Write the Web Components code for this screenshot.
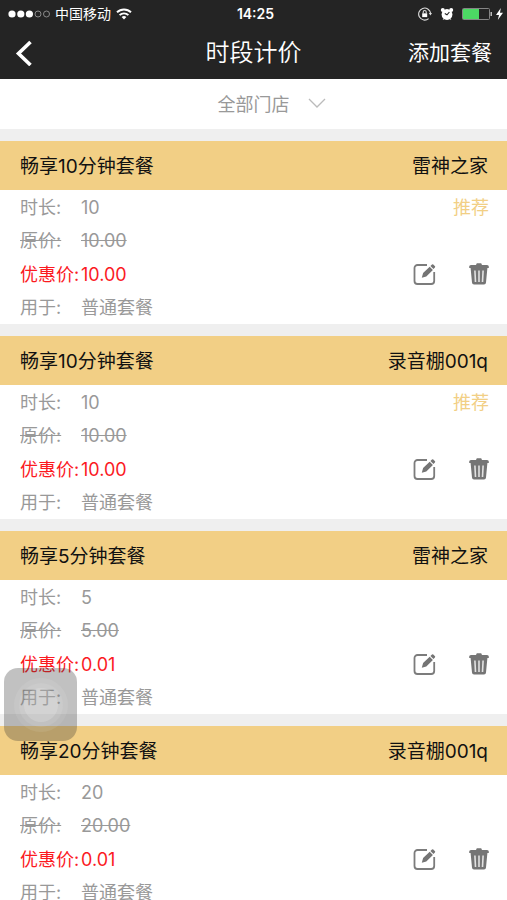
<!DOCTYPE html>
<html lang="zh-CN">
<head>
<meta charset="utf-8">
<meta name="viewport" content="width=device-width, initial-scale=1">
<title>时段计价</title>
<style>
  body {
    margin: 0;
    font-family: Inter, 'Noto Sans CJK SC', sans-serif;
    font-size: 18px;
    color: #999;
    background: #efefef;
  }
</style>
</head>
<body>
<pricing-page></pricing-page>

<script>
class StatusBar extends HTMLElement {
  constructor() {
    super()
    this.attachShadow({ mode: 'open' }).innerHTML = `
      <style>
        :host {
          display: grid;
          grid-template-columns: 1fr auto 1fr;
          align-items: center;
          height: 28px;
          padding: 0 4px 0 8px;
          font-size: 14px;
          line-height: 28px;
          color: #fff;
        }
        div { display: flex; align-items: center; gap: 5px; }
        .right { justify-content: flex-end; gap: 8px; }
        .power { gap: 4px; }
        time { font-weight: 600; font-size: 14px; }
        svg { display: block; }
      </style>
      <div>
        <svg width="42" height="10" viewBox="0 0 42 10" fill="#fff">
          <circle cx="4" cy="5" r="3.6"/><circle cx="12.8" cy="5" r="3.6"/><circle cx="21.4" cy="5" r="3.6"/>
          <g fill="none" stroke="#8a8a8a"><circle cx="30" cy="5" r="3"/><circle cx="38.5" cy="5" r="3"/></g>
        </svg>
        <span><slot name="carrier"></slot></span>
        <svg width="16" height="12" viewBox="0 0 16 12" fill="none" stroke="#fff" stroke-width="1.9">
          <path d="M1 4.3a10 10 0 0 1 14 0M3.6 7.2a6.2 6.2 0 0 1 8.8 0"/>
          <path d="M8 11.5 5.6 9.1a3.4 3.4 0 0 1 4.8 0z" fill="#fff" stroke="none"/>
        </svg>
      </div>
      <time><slot name="time"></slot></time>
      <div class="right">
        <svg width="14" height="14" viewBox="0 0 14 14" fill="none" stroke="#ddd" stroke-width="1.1">
          <path d="M12.6 6.2A6 6 0 1 0 10.6 11.6"/>
          <path d="M10.8 6h3.2l-1.6 2.4z" fill="#ddd" stroke="none"/>
          <rect x="4.2" y="6.3" width="5" height="3.8" fill="#fff" stroke="none"/>
          <path d="M5.2 6.5V5a1.5 1.5 0 0 1 3 0v1.5"/>
        </svg>
        <svg width="14" height="14" viewBox="0 0 14 14">
          <g fill="#fff"><circle cx="7" cy="7.5" r="5.4"/><circle cx="2.8" cy="3" r="2"/><circle cx="11.2" cy="3" r="2"/>
          <path d="m2.5 13 2-2.6 1.5 1zM11.5 13l-2-2.6-1.5 1z"/></g>
          <path d="M9.4 5 7 7.8 4.8 6.6" fill="none" stroke="#242424" stroke-width="1.1"/>
        </svg>
        <div class="power">
          <svg width="30" height="14" viewBox="0 0 30 14">
            <rect x=".5" y="1.5" width="27" height="11" rx="1" fill="none" stroke="#858585"/>
            <path d="M1 2h16v10H1z" fill="#4cd964"/>
            <path d="M28.5 5h1.5v4h-1.5z" fill="#bbb"/>
          </svg>
          <svg width="7" height="12" viewBox="0 0 7 12"><path d="M4.8 0 0 7h3L1.8 12 7 4.8H4z" fill="#fff"/></svg>
        </div>
      </div>`
  }
}

customElements.define('status-bar', StatusBar)

class NavBar extends HTMLElement {
  constructor() {
    super()
    this.attachShadow({ mode: 'open' }).innerHTML = `
      <style>
        :host {
          display: grid;
          grid-template-columns: 1fr auto 1fr;
          align-items: center;
          height: 49px;
          padding: 0 15px 2px;
          color: #fff;
        }
        h1 { margin: 0; font-size: 24px; font-weight: 350; line-height: 32px; }
        button {
          padding: 0;
          border: 0;
          background: none;
          font: inherit;
          font-size: 21px;
          line-height: 32px;
          color: inherit;
        }
        .back { justify-self: start; }
        .action { justify-self: end; }
        svg { display: block; }
      </style>
      <button class="back" aria-label="返回">
        <svg width="18" height="26" viewBox="0 0 18 26" fill="none" stroke="#fff" stroke-width="3.6">
          <path d="M15.5 2 3.5 13.500 15.500 25"/>
        </svg>
      </button>
      <h1><slot></slot></h1>
      <button class="action"><slot name="action"></slot></button>`
  }
}

customElements.define('nav-bar', NavBar)

class StoreFilter extends HTMLElement {
  constructor() {
    super()
    this.attachShadow({ mode: 'open' }).innerHTML = `
      <style>
        :host { display: block; background: #fff; }
        button {
          display: grid;
          grid-template-columns: 1fr auto 1fr;
          align-items: center;
          gap: 18px;
          width: 100%;
          height: 50px;
          padding: 0 0 2px;
          border: 0;
          background: none;
          font: inherit;
          color: inherit;
        }
        span { grid-column: 2; }
      </style>
      <button aria-haspopup="listbox">
        <span><slot></slot></span>
        <svg width="18" height="10" viewBox="0 0 18 10" fill="none" stroke="#bbb" stroke-width="1.3">
          <path d="m1 1 8 8 8-8"/>
        </svg>
      </button>`
  }
}

customElements.define('store-filter', StoreFilter)

class PackageCard extends HTMLElement {
  constructor() {
    super()
    this.attachShadow({ mode: 'open' })
  }

  connectedCallback() {
    const { name, store, duration, price, sale, usage } = this.dataset
    const badge = this.hasAttribute('recommended') ? '<span class="badge">推荐</span>' : ''

    this.shadowRoot.innerHTML = `
      <style>
        :host { display: block; background: #fff; }
        header {
          display: flex;
          align-items: center;
          justify-content: space-between;
          height: 47px;
          padding: 0 19px 2px 20px;
          background: #f2cf85;
          color: #111;
          font-size: 19px;
        }
        h2 { margin: 0; font: inherit; }
        .body {
          display: grid;
          grid-template-columns: 1fr auto;
          padding: 0 18px 0 20px;
        }
        dl {
          display: grid;
          grid-template-columns: 61px 1fr;
          grid-template-rows: 34px 33px 34px 33px;
          align-items: center;
          margin: 0;
          line-height: 33px;
          white-space: nowrap;
        }
        dd { margin: 0; }
        .sale { color: #fb1a1f; }
        .side {
          display: grid;
          grid-template-rows: 34px 33px 34px 33px;
          align-items: center;
          justify-items: end;
          line-height: 33px;
        }
        .badge { color: #f2cf85; }
        .actions { grid-row: 3; display: flex; gap: 32px; }
        button { padding: 0; border: 0; background: none; }
        svg { display: block; }
      </style>
      <header><h2>${name}</h2><span>${store}</span></header>
      <div class="body">
        <dl>
          <dt>时长:</dt><dd>${duration}</dd>
          <dt><s>原价:</s></dt><dd><s>${price}</s></dd>
          <dt class="sale">优惠价:</dt><dd class="sale">${sale}</dd>
          <dt>用于:</dt><dd>${usage}</dd>
        </dl>
        <div class="side">
          ${badge}
          <div class="actions">
            <button aria-label="编辑">
              <svg width="24" height="24" viewBox="0 0 24 24">
                <path d="M14 3H4.500a3 3 0 0 0-3 3v13a3 3 0 0 0 3 3h13.700a3 3 0 0 0 3-3v-9" fill="none" stroke="#7c7c7c" stroke-width="1.800"/>
                <path d="m8.800 15.800 1.300-4.700 6.600-6.400 3.200 3.200-6.600 6.600zM17.400 4l1.600-1.500q.7-.5 1.300.1l1.700 1.700q.5.600-.1 1.200l-1.400 1.500z" fill="#747474"/>
              </svg>
            </button>
            <button aria-label="删除">
              <svg width="20" height="24" viewBox="1 0 20 24" fill="#757575">
                <path d="M1.200 4.500q0-1.500 1.800-1.500h5l.8-1.700h4.400L14 3h5q1.800 0 1.800 1.500V6H1.200z"/>
                <path d="M2.600 6h16.800l-1.400 14.500q-.1 2-2 2H6q-1.900 0-2-2z"/>
                <path d="M6.900 8.500 7.500 20M11 8.500V20M15.100 8.500 14.500 20" stroke="#e2e2e2" stroke-width="1.600"/>
              </svg>
            </button>
          </div>
        </div>
      </div>`
  }
}

customElements.define('package-card', PackageCard)

// Floating touch button, stays over the list while it scrolls
class AssistTouch extends HTMLElement {
  constructor() {
    super()
    this.attachShadow({ mode: 'open' }).innerHTML = `
      <style>
        :host { position: fixed; left: 4px; bottom: 159px; }
        button {
          display: grid;
          place-items: center;
          width: 73px;
          height: 73px;
          padding: 0;
          border: 0;
          border-radius: 14px;
          background: rgba(50, 50, 50, .3);
        }
        span { display: grid; place-items: center; border-radius: 50%; background: rgba(255, 255, 255, .08); }
        .outer { width: 54px; height: 54px; }
        .middle { width: 44px; height: 44px; }
        .inner { width: 34px; height: 34px; background: rgba(255, 255, 255, .16); }
      </style>
      <button aria-label="辅助触控"><span class="outer"><span class="middle"><span class="inner"></span></span></span></button>`
  }
}

customElements.define('assist-touch', AssistTouch)

const packages = [
  { name: '畅享10分钟套餐', store: '雷神之家', duration: '10', price: '10.00', sale: '10.00', usage: '普通套餐', recommended: true },
  { name: '畅享10分钟套餐', store: '录音棚001q', duration: '10', price: '10.00', sale: '10.00', usage: '普通套餐', recommended: true },
  { name: '畅享5分钟套餐', store: '雷神之家', duration: '5', price: '5.00', sale: '0.01', usage: '普通套餐' },
  { name: '畅享20分钟套餐', store: '录音棚001q', duration: '20', price: '20.00', sale: '0.01', usage: '普通套餐' },
]

class PricingPage extends HTMLElement {
  constructor() {
    super()
    this.attachShadow({ mode: 'open' }).innerHTML = `
      <style>
        :host { display: flex; flex-direction: column; height: 100vh; }
        .top { flex: none; background: #242424; }
        main { flex: 1; min-height: 0; overflow-y: auto; scrollbar-width: none; }
        .list { display: grid; gap: 12px; padding: 12px 0; }
      </style>
      <div class="top">
        <status-bar><span slot="carrier">中国移动</span><span slot="time">14:25</span></status-bar>
        <nav-bar>时段计价<span slot="action">添加套餐</span></nav-bar>
      </div>
      <main>
        <store-filter>全部门店</store-filter>
        <div class="list"></div>
      </main>
      <assist-touch></assist-touch>`

    const list = this.shadowRoot.querySelector('.list')
    packages.forEach(({ recommended, ...data }) => {
      const card = document.createElement('package-card')
      Object.assign(card.dataset, data)
      card.toggleAttribute('recommended', !!recommended)
      list.appendChild(card)
    })
  }
}

customElements.define('pricing-page', PricingPage)
</script>
</body>
</html>
